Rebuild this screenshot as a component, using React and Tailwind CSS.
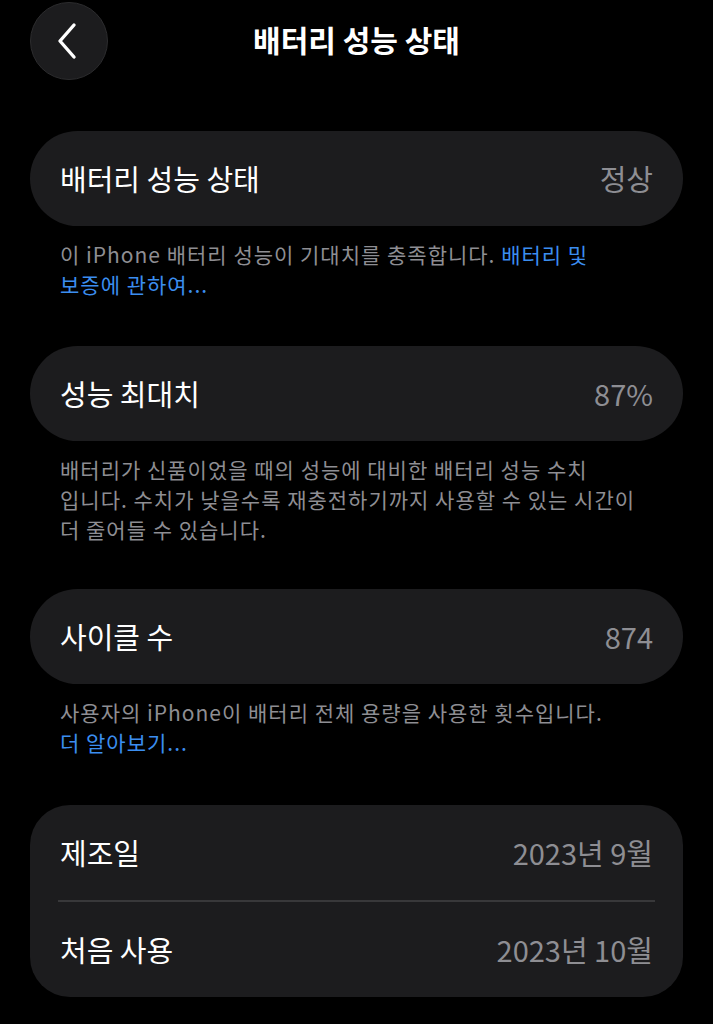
import React from "react";

const FONT = { fontFamily: '"Noto Sans CJK KR", "Noto Sans", sans-serif' };

function Row({ label, value }) {
  return (
    <div className="flex items-center justify-between h-[95px] pl-[30px] pr-[30px]">
      <span className="text-[29px] text-white">{label}</span>
      <span className="text-[29px] text-[#8e8e93]">{value}</span>
    </div>
  );
}

function Card({ children, rounded = "rounded-[48px]" }) {
  return <div className={`bg-[#1c1c1e] ${rounded} mx-[30px]`}>{children}</div>;
}

function Note({ children }) {
  return (
    <p className="ml-[60px] mt-[13px] text-[21px] leading-[30px] tracking-[1px] text-[#8e8e93] whitespace-nowrap">
      {children}
    </p>
  );
}

export default function App() {
  return (
    <div className="min-h-[1024px] w-[713px] bg-black pb-10 overflow-hidden" style={FONT}>
      {/* Header */}
      <div className="relative flex items-center justify-center h-[80px]">
        <button className="absolute left-[30px] top-[2px] w-[78px] h-[78px] rounded-full bg-[#1c1c1e] border border-[#2c2c2e] flex items-center justify-center">
          <svg width="26" height="40" viewBox="0 0 26 40" fill="none" className="-ml-[4px]">
            <path d="M20 4 L6 20 L20 36" stroke="white" strokeWidth="3.4" strokeLinecap="round" strokeLinejoin="round" />
          </svg>
        </button>
        <h1 className="text-[30px] font-bold text-white -mt-[2px]">배터리 성능 상태</h1>
      </div>

      <div className="mt-[51px]">
        <Card>
          <Row label="배터리 성능 상태" value="정상" />
        </Card>
        <Note>
          이 iPhone 배터리 성능이 기대치를 충족합니다.{" "}
          <span className="text-[#3b8ef0]">배터리 및</span>
          <br />
          <span className="text-[#3b8ef0]">보증에 관하여...</span>
        </Note>
      </div>

      <div className="mt-[47px]">
        <Card>
          <Row label="성능 최대치" value="87%" />
        </Card>
        <Note>
          배터리가 신품이었을 때의 성능에 대비한 배터리 성능 수치
          <br />
          입니다. 수치가 낮을수록 재충전하기까지 사용할 수 있는 시간이
          <br />더 줄어들 수 있습니다.
        </Note>
      </div>

      <div className="mt-[45px]">
        <Card>
          <Row label="사이클 수" value="874" />
        </Card>
        <Note>
          사용자의 iPhone이 배터리 전체 용량을 사용한 횟수입니다.
          <br />
          <span className="text-[#3b8ef0]">더 알아보기...</span>
        </Note>
      </div>

      <div className="mt-[48px]">
        <Card rounded="rounded-[40px]">
          <Row label="제조일" value="2023년 9월" />
          <div className="mx-[28px] h-[2px] bg-[#38383a]" />
          <Row label="처음 사용" value="2023년 10월" />
        </Card>
      </div>
    </div>
  );
}
